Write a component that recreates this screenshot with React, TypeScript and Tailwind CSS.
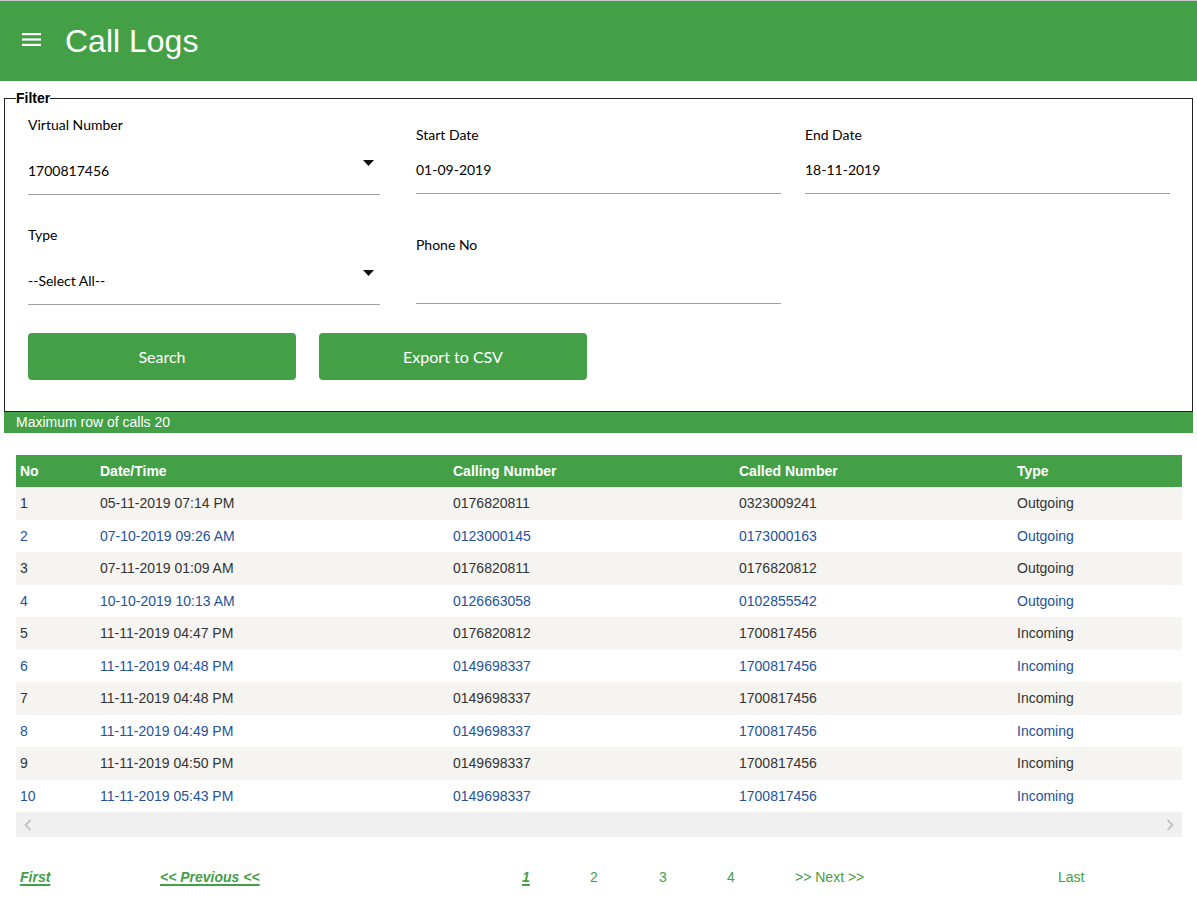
import React from 'react'

const rows = [
  ['1', '05-11-2019 07:14 PM', '0176820811', '0323009241', 'Outgoing'],
  ['2', '07-10-2019 09:26 AM', '0123000145', '0173000163', 'Outgoing'],
  ['3', '07-11-2019 01:09 AM', '0176820811', '0176820812', 'Outgoing'],
  ['4', '10-10-2019 10:13 AM', '0126663058', '0102855542', 'Outgoing'],
  ['5', '11-11-2019 04:47 PM', '0176820812', '1700817456', 'Incoming'],
  ['6', '11-11-2019 04:48 PM', '0149698337', '1700817456', 'Incoming'],
  ['7', '11-11-2019 04:48 PM', '0149698337', '1700817456', 'Incoming'],
  ['8', '11-11-2019 04:49 PM', '0149698337', '1700817456', 'Incoming'],
  ['9', '11-11-2019 04:50 PM', '0149698337', '1700817456', 'Incoming'],
  ['10', '11-11-2019 05:43 PM', '0149698337', '1700817456', 'Incoming'],
]

const colW = ['w-[80px]', 'w-[353px]', 'w-[286px]', 'w-[278px]', 'w-[169px]']

function Caret() {
  return (
    <svg className="absolute right-[6px] top-[27px]" width="11" height="6" viewBox="0 0 11 6">
      <path d="M0 0h11L5.5 6z" fill="#111" />
    </svg>
  )
}

function SelectField({ label, value }: { label: string; value: string }) {
  return (
    <div className="w-[352px] flex flex-col">
      <label className="leading-4 text-sm text-black">{label}</label>
      <div className="relative h-[62px] flex items-end pb-[15px] border-b border-[#a0a0a0] text-sm text-black leading-4">
        {value}
        <Caret />
      </div>
    </div>
  )
}

function TextField({ label, value }: { label: string; value: string }) {
  return (
    <div className="w-[365px] flex flex-col pt-[10px]">
      <label className="leading-4 text-sm text-black">{label}</label>
      <div className="h-[51px] flex items-end pb-[15px] border-b border-[#a0a0a0] text-sm text-black leading-4">
        {value}
      </div>
    </div>
  )
}

export default function App() {
  return (
    <div className="w-[1197px] min-h-[897px] bg-white border-t border-[#c8c8c8]" style={{ fontFamily: '"Liberation Sans", Arial, sans-serif' }}>
      {/* Header */}
      <header className="h-[80px] bg-[#43a047] flex items-center text-white">
        <svg className="ml-[22px] mt-[-4px]" width="19" height="13" viewBox="0 0 19 13">
          <rect x="0" y="0" width="19" height="2.2" fill="#fff" />
          <rect x="0" y="5.4" width="19" height="2.2" fill="#fff" />
          <rect x="0" y="10.8" width="19" height="2.2" fill="#fff" />
        </svg>
        <h1 className="ml-[24px] text-[32px] leading-none">Call Logs</h1>
      </header>

      {/* Filter */}
      <fieldset className="mx-[4px] mt-[9px] border border-[#222]" style={{ fontFamily: 'Lato, "Open Sans", sans-serif' }}>
        <legend className="ml-[11px] text-sm font-bold leading-4 text-black" style={{ fontFamily: '"Liberation Sans", Arial, sans-serif' }}>Filter</legend>
        <div className="pt-[11px] pb-[31px] pl-[23px]">
          <div className="flex items-start">
            <SelectField label="Virtual Number" value="1700817456" />
            <div className="ml-[36px]"><TextField label="Start Date" value="01-09-2019" /></div>
            <div className="ml-[24px]"><TextField label="End Date" value="18-11-2019" /></div>
          </div>
          <div className="flex items-start mt-[32px]">
            <SelectField label="Type" value="--Select All--" />
            <div className="ml-[36px]"><TextField label="Phone No" value="" /></div>
          </div>
          <div className="flex gap-[23px] mt-[28px]">
            <button className="w-[268px] h-[47px] rounded-[4px] bg-[#43a047] text-white text-base">Search</button>
            <button className="w-[268px] h-[47px] rounded-[4px] bg-[#43a047] text-white text-base">Export to CSV</button>
          </div>
        </div>
      </fieldset>

      <div className="mx-[4px] h-[21px] bg-[#43a047] text-white text-sm leading-[21px] pl-[12px]">Maximum row of calls 20</div>

      {/* Table */}
      <div className="ml-[16px] w-[1166px] mt-[22px] text-sm">
        <div className="flex h-[32px] items-center bg-[#43a047] text-white font-bold">
          {['No', 'Date/Time', 'Calling Number', 'Called Number', 'Type'].map((h, i) => (
            <div key={h} className={`${colW[i]} pl-[4px]`}>{h}</div>
          ))}
        </div>
        {rows.map((r, ri) => (
          <div key={ri} className={ri % 2 === 0 ? 'flex h-[32.5px] items-center bg-[#f5f4f1] text-[#333]' : 'flex h-[32.5px] items-center bg-white text-[#24529a]'}>
            {r.map((c, i) => (
              <div key={i} className={`${colW[i]} pl-[4px]`}>{c}</div>
            ))}
          </div>
        ))}
        <div className="h-[25px] bg-[#f0f0f0] flex items-center justify-between px-[8px]">
          <svg width="8" height="12" viewBox="0 0 8 12"><path d="M6.5 1L1.5 6l5 5" stroke="#c2c2c2" strokeWidth="1.8" fill="none" /></svg>
          <svg width="8" height="12" viewBox="0 0 8 12"><path d="M1.5 1l5 5-5 5" stroke="#c2c2c2" strokeWidth="1.8" fill="none" /></svg>
        </div>

        {/* Pagination */}
        <div className="flex h-[32px] items-center mt-[24px] text-[#43a047]">
          <div className="w-[140px] pl-[4px]"><a className="font-bold italic underline underline-offset-2 decoration-2">First</a></div>
          <div className="w-[362px] pl-[4px]"><a className="font-bold italic underline underline-offset-2 decoration-2">&lt;&lt; Previous &lt;&lt;</a></div>
          <div className="w-[68px] pl-[4px]"><a className="font-bold italic underline underline-offset-2 decoration-2">1</a></div>
          <div className="w-[69px] pl-[4px]">2</div>
          <div className="w-[68px] pl-[4px]">3</div>
          <div className="w-[68px] pl-[4px]">4</div>
          <div className="w-[263px] pl-[4px]">&gt;&gt; Next &gt;&gt;</div>
          <div className="pl-[4px]">Last</div>
        </div>
      </div>
    </div>
  )
}
